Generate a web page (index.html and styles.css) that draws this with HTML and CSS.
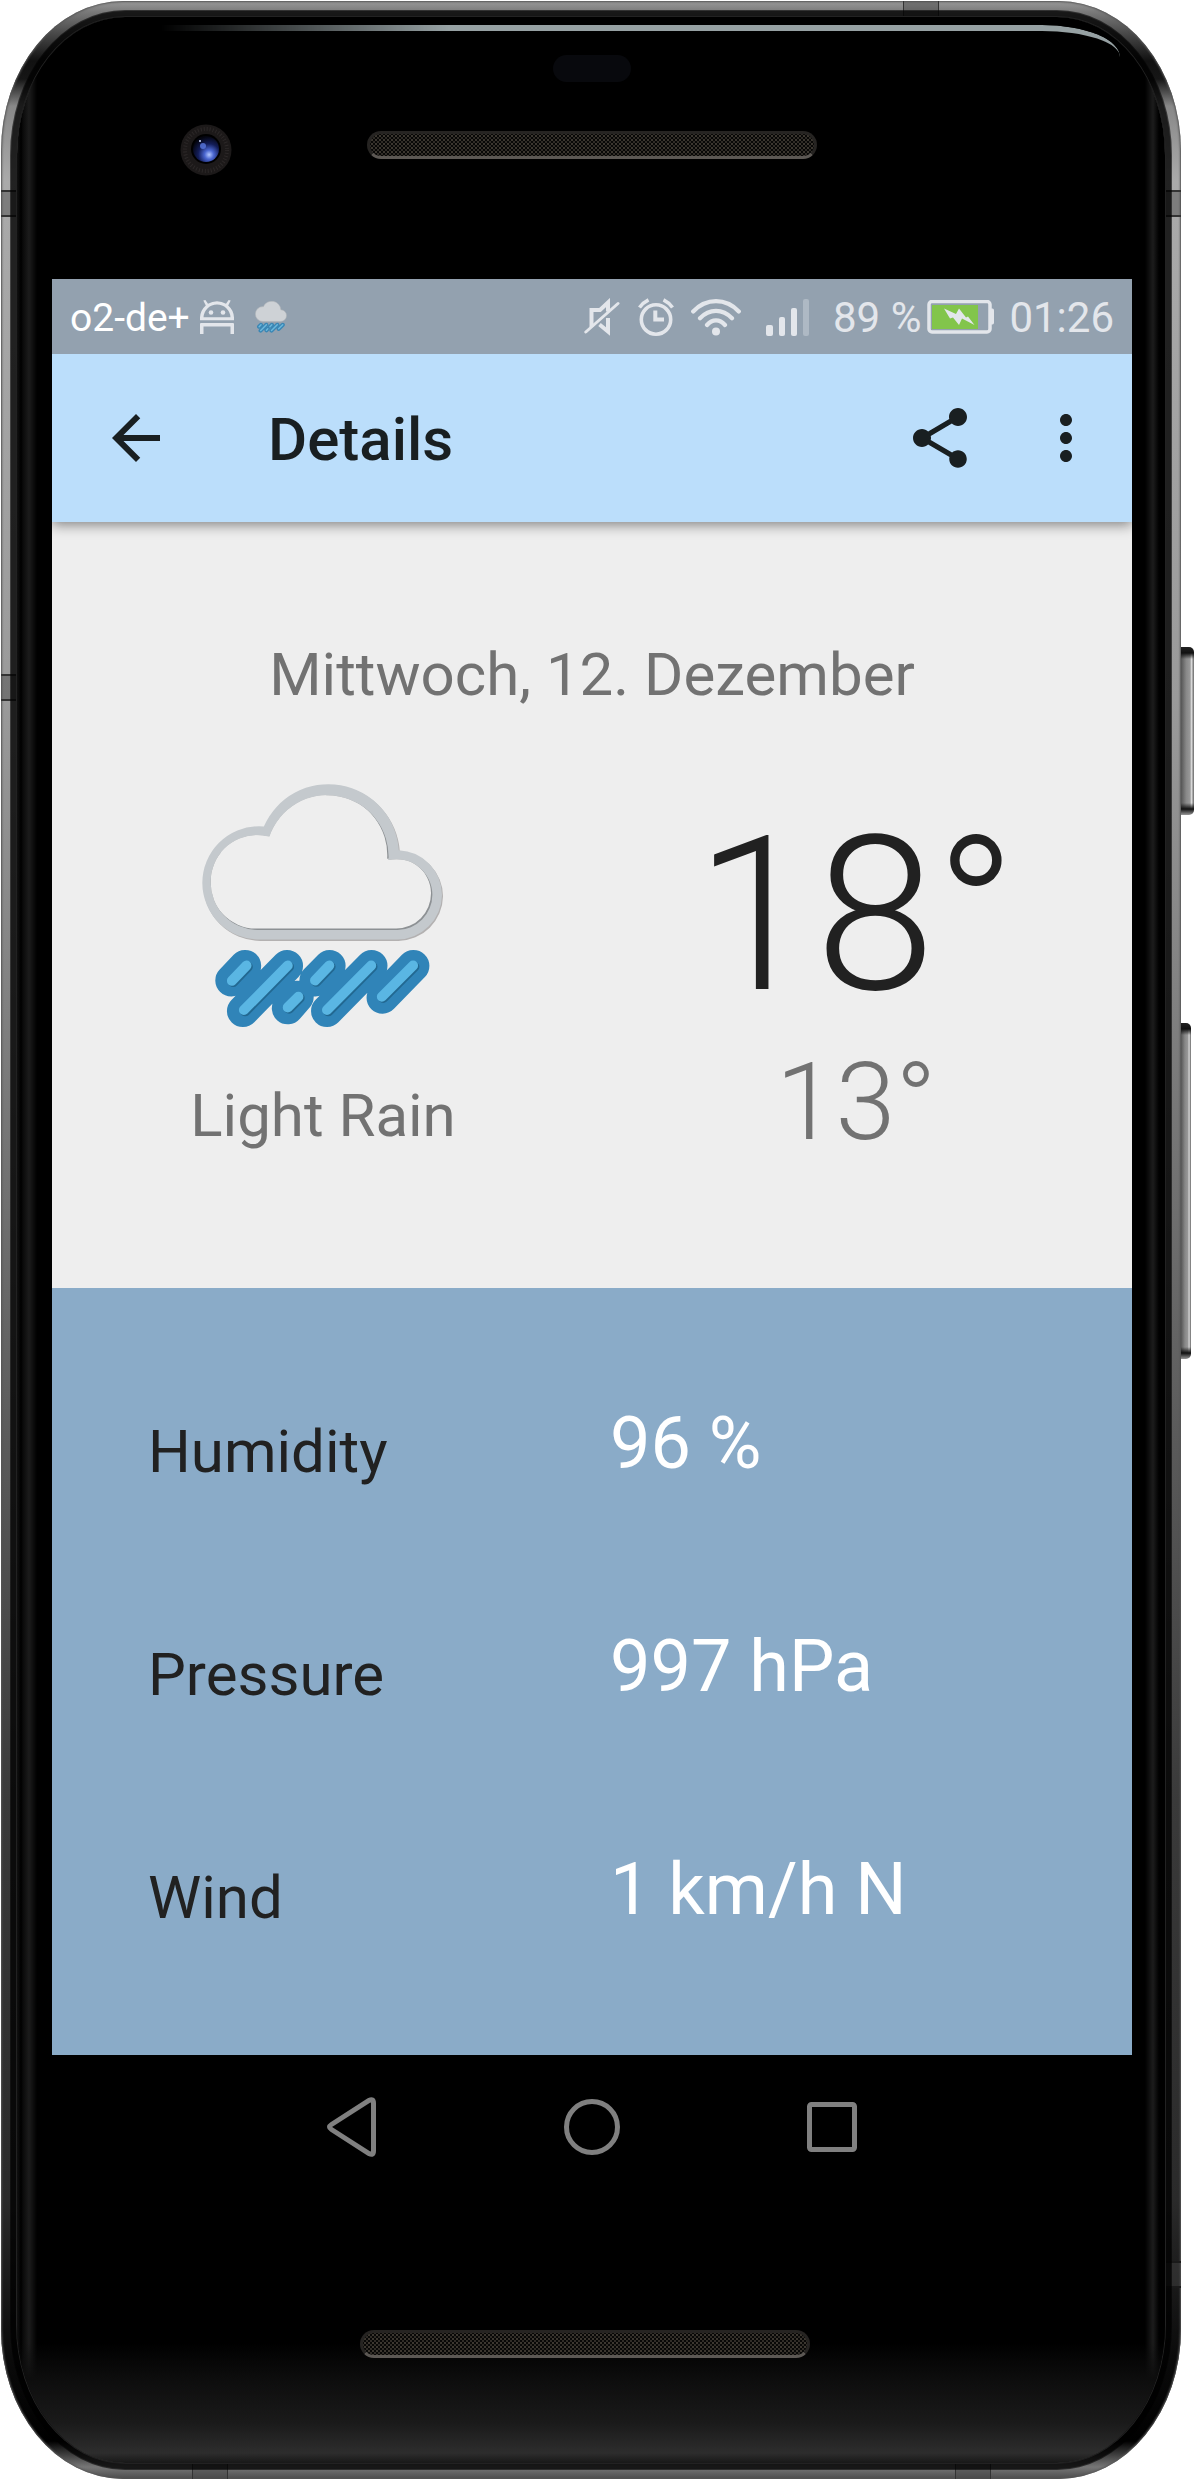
FILE: index.html
```html
<!DOCTYPE html>
<html lang="de">
<head>
<meta charset="utf-8">
<meta name="viewport" content="width=device-width, initial-scale=1">
<title>Details</title>
<link rel="stylesheet" href="styles.css">
</head>
<body>
<div class="phone">
  <span class="side-key power"></span>
  <span class="side-key volume"></span>
  <span class="seam seam-left-top"></span>
  <span class="seam seam-left-mid"></span>
  <span class="seam seam-right-top"></span>
  <span class="seam seam-right-low"></span>
  <span class="seam seam-top"></span>
  <span class="seam seam-foot-left"></span>
  <span class="seam seam-foot-right"></span>
  <div class="bezel">
    <div class="glare"></div>
    <header class="forehead">
      <div class="sensor"></div>
      <svg class="camera" viewBox="0 0 52 52" aria-hidden="true">
        <defs><radialGradient id="lens" cx=".62" cy=".72" r=".7"><stop offset="0" stop-color="#b4c8ff"/><stop offset=".25" stop-color="#4a66d0"/><stop offset=".6" stop-color="#131d58"/><stop offset="1" stop-color="#04050f"/></radialGradient></defs>
        <circle cx="26" cy="26" r="25.500" fill="#1c1919"/>
        <circle cx="26" cy="26" r="21" fill="none" stroke="#2c2828" stroke-width="4" stroke-dasharray="1 2"/>
        <circle cx="26" cy="25" r="15" fill="#000"/>
        <circle cx="26" cy="25" r="13" fill="url(#lens)"/>
        <circle cx="23" cy="22" r="3" fill="#5a78e0" opacity=".8"/>
        <circle cx="20" cy="17" r="1" fill="#cfdcff"/>
      </svg>
      <div class="speaker"></div>
    </header>

    <main class="screen">
      <div class="status">
        <div class="status-left">
          <span class="carrier">o2-de+</span>
          <svg class="i-android" viewBox="0 0 34 34" aria-hidden="true"><path fill="#e3e6eb" fill-rule="evenodd" d="M3.300.6 5.400 0l2.600 3.800A17 17 0 0 1 17 1.200 17 17 0 0 1 26 3.800L28.600 0l2.100.6-2.500 5A17 17 0 0 1 34 17.500V20.300H0V17.500A17 17 0 0 1 5.800 5.600ZM3.500 17.300h27A13.500 13.500 0 0 0 17 4.500 13.500 13.500 0 0 0 3.500 17.300ZM0 24q0-1 1-1h32q1 0 1 1v10h-3.500v-7.500H3.500V34H0Z"/><circle cx="11" cy="12.500" r="2.300" fill="#e3e6eb"/><circle cx="23" cy="12.500" r="2.300" fill="#e3e6eb"/></svg>
          <svg class="i-rain" viewBox="90 65 740 740" aria-hidden="true">
            <path fill="#ced2d6" stroke="#aeb2b6" stroke-width="12" d="M268 537A171 171 0 0 1 97 366 171 171 0 0 1 268 195L282 196A212 212 0 0 1 688 267 136 136 0 0 1 820 402 136 136 0 0 1 684 537Z"/>
            <g fill="none" stroke-linecap="round"><path stroke="#3a86b4" stroke-width="94" d="M226 615 184 659M352 615 219 751M480 615 437 659M606 615 472 751M732 615 639 711M384 708 354 743"/><path stroke="#6cb8dc" stroke-width="34" d="M230 614 186 660M354 614 222 748M479 614 436 659M605 614 472 748M731 614 637 708M386 708 354 740"/></g>
          </svg>
        </div>
        <div class="status-right">
          <svg class="i-mute" viewBox="0 0 36 38" aria-hidden="true"><g fill="none" stroke="#e3e6eb"><path stroke-width="4" d="M7.500 29V12h8.500l8-7.500v9M15.500 26.500 24 33.500V20"/><path stroke-width="3" stroke-linecap="round" d="M1.800 34 34 5.500"/></g></svg>
          <svg class="i-alarm" viewBox="0 0 36 38" aria-hidden="true"><g fill="none" stroke="#e3e6eb"><circle cx="18" cy="21.500" r="14.700" stroke-width="3.600"/><path stroke-width="4" d="M17.300 12.500V21.500H26"/><path stroke-width="3.600" d="M1.500 9.500Q5 4.500 10.500 1.800M34.500 9.500Q31 4.500 25.500 1.800"/></g></svg>
          <svg class="i-wifi" viewBox="0 0 50 38" aria-hidden="true"><g fill="none" stroke="#e3e6eb" stroke-width="4.200" stroke-linecap="round"><path d="M2.200 13.500Q12 3.200 25 3.200T47.800 13.500M9 20.200Q16 12.800 25 12.800T41 20.200M16 27Q20 22.400 25 22.400T34 27"/></g><circle cx="25" cy="33.500" r="4" fill="#e3e6eb"/></svg>
          <svg class="i-signal" viewBox="0 0 44 38" aria-hidden="true"><g fill="#e3e6eb"><rect y="27" width="7" height="11" rx="2"/><rect x="13" y="19" width="6" height="19" rx="2"/><rect x="25" y="10" width="6" height="28" rx="2"/><rect x="37" y="1" width="6" height="37" rx="2" opacity=".35"/></g></svg>
          <span class="charge">89 %</span>
          <svg class="i-battery" viewBox="0 0 68 34" aria-hidden="true"><rect x="2" y="1.500" width="61" height="30.500" rx="3" fill="none" stroke="#e3e6eb" stroke-width="3.500"/><rect x="5" y="5" width="46" height="24" fill="#82c54b"/><path fill="#e3e6eb" d="M17 8.500 29 14 32 8.500 39 17.500 41 16.500 47.500 25 35 18.500 32 25 26 17.500 23 18.500ZM64 8.500h1.500q1.500 0 1.500 2v12q0 2-1.500 2H64Z"/></svg>
          <span class="clock">01:26</span>
        </div>
      </div>

      <nav class="appbar">
        <button class="icon-btn" aria-label="Back"><svg viewBox="0 0 24 24"><path d="M20 11H7.830l5.590-5.590L12 4l-8 8 8 8 1.410-1.410L7.830 13H20v-2z"/></svg></button>
        <h1>Details</h1>
        <button class="icon-btn" aria-label="Share"><svg viewBox="0 0 24 24"><path d="M18 16.080c-.76 0-1.440.3-1.960.77L8.910 12.700c.05-.23.09-.46.09-.7s-.04-.47-.09-.7l7.050-4.110c.54.5 1.250.81 2.040.81 1.660 0 3-1.340 3-3s-1.340-3-3-3-3 1.340-3 3c0 .24.04.47.09.7L8.040 9.810C7.500 9.310 6.790 9 6 9c-1.660 0-3 1.340-3 3s1.340 3 3 3c.79 0 1.500-.31 2.040-.81l7.120 4.160c-.05.21-.08.43-.08.65 0 1.610 1.310 2.920 2.920 2.920s2.920-1.310 2.920-2.920-1.310-2.920-2.920-2.920z"/></svg></button>
        <button class="icon-btn" aria-label="More options"><svg viewBox="0 0 24 24"><path d="M12 8c1.100 0 2-.9 2-2s-.9-2-2-2-2 .9-2 2 .9 2 2 2zm0 2c-1.100 0-2 .9-2 2s.9 2 2 2 2-.9 2-2-.9-2-2-2zm0 6c-1.100 0-2 .9-2 2s.9 2 2 2 2-.9 2-2-.9-2-2-2z"/></svg></button>
      </nav>

      <section class="today">
        <p class="date">Mittwoch, 12. Dezember</p>
        <div class="summary">
          <div class="condition">
            <svg class="weather" viewBox="90 65 740 740" aria-hidden="true">
              <defs>
                <path id="cloud-outer" d="M268 536A171 171 0 0 1 97 366 171 171 0 0 1 268 195L282 196A212 212 0 0 1 688 267 136 136 0 0 1 818 402 136 136 0 0 1 684 536Z"/>
                <path id="cloud-inner" d="M262 507A143 143 0 0 1 122 362 140 140 0 0 1 262 222Q281 222 299 227A184 184 0 0 1 657 297 108 108 0 0 1 789 401 106 106 0 0 1 684 507Z"/>
                <clipPath id="cloud-hole"><use href="#cloud-inner"/></clipPath>
              </defs>
              <use href="#cloud-outer" x="3" y="4" fill="#b3b1b1"/>
              <use href="#cloud-outer" fill="#c4c9cd"/>
              <use href="#cloud-inner" fill="#8d9194"/>
              <g clip-path="url(#cloud-hole)"><use href="#cloud-inner" x="-4" y="-4" fill="#eee"/><path fill="#eee" d="M100 60H470V460H200Z"/></g>
              <g fill="none" stroke-linecap="round">
                <path stroke="#3084b8" stroke-width="96" d="M226 615 184 659M352 615 219 751M480 615 437 659M606 615 472 751M732 615 639 711M384 708 354 743"/>
                <path stroke="#226891" stroke-width="30" d="M234 618 190 664M358 618 226 752M483 618 440 663M609 618 476 752M735 618 641 712M390 712 358 744"/>
                <path stroke="#5ab6e3" stroke-width="30" d="M230 614 186 660M354 614 222 748M479 614 436 659M605 614 472 748M731 614 637 708M386 708 354 740"/>
              </g>
            </svg>
            <p class="label">Light Rain</p>
          </div>
          <div class="temps">
            <p class="high">18°</p>
            <p class="low">13°</p>
          </div>
        </div>
      </section>

      <dl class="facts">
        <div class="fact"><dt>Humidity</dt><dd>96 %</dd></div>
        <div class="fact"><dt>Pressure</dt><dd>997 hPa</dd></div>
        <div class="fact"><dt>Wind</dt><dd>1 km/h N</dd></div>
      </dl>
    </main>

    <nav class="navbar">
      <button aria-label="Back"><svg viewBox="0 0 60 60"><path d="M9.500 27.500 47 3.500Q51.500 1 51.500 6V54Q51.500 59 47 56.500L9.500 32.500Q5.500 30 9.500 27.500Z"/></svg></button>
      <button aria-label="Home"><svg viewBox="0 0 60 60"><circle cx="30" cy="30" r="25.500"/></svg></button>
      <button aria-label="Recent apps"><svg viewBox="0 0 60 60"><rect x="7.500" y="7.500" width="45" height="45" rx="2"/></svg></button>
    </nav>
    <footer class="chin"><div class="speaker"></div></footer>
  </div>
</div>
</body>
</html>
```
FILE: styles.css
```css
* { box-sizing: border-box; }
body { margin: 0; background: #fff; font-family: Roboto, "Liberation Sans", sans-serif; color: #212121; }
p, h1, dl, dd { margin: 0; }
button { border: 0; padding: 0; background: none; }
svg { display: block; }

/* device body */
.phone {
  position: relative;
  margin: 1px 13px 0 1px;
  padding: 16px;
  border-radius: 122px / 150px;
  background:
    linear-gradient(#999 0, #777 12px, #444 35px, #111 60px, #161616 78px, #888 105px, #aaa 180px, #9a9a9a 700px, #707070 1200px, #3a3a3a 1800px, #2a2a2a 2200px, #0a0a0a 2360px, #000 2440px, #777 2466px, #444 2480px);
  box-shadow: inset 0 0 2px 1px #555;
}
.bezel {
  position: relative;
  padding: 0 33px 0 35px;
  border-radius: 108px / 138px;
  background:
    linear-gradient(transparent calc(100% - 120px), #0d0d0d calc(100% - 84px), #1a1a1a calc(100% - 40px), #2d2d2d calc(100% - 10px), #181818),
    linear-gradient(90deg, #111 0, #000 4px, #0a0a0a 6px, #1c1c1c 12px, #000 20px, #000 calc(100% - 20px), #1c1c1c calc(100% - 12px), #000 calc(100% - 6px), #000 100%);
  box-shadow: 0 0 0 1px #222, 0 0 0 6px rgba(0, 0, 0, .5), 0 0 0 7px rgba(0, 0, 0, .6);
}
.glare {
  position: absolute;
  top: 8px;
  left: 144px;
  right: 45px;
  height: 34px;
  border-top: 6px solid #96a1a3;
  border-radius: 0 78px 0 0 / 0 32px 0 0;
  -webkit-mask-image: linear-gradient(90deg, transparent, #000 30%);
  mask-image: linear-gradient(90deg, transparent, #000 30%);
}
.seam { position: absolute; background: rgba(70, 70, 70, .45); border: 0 solid #333; }
.seam-left-top, .seam-left-mid { left: 0; width: 16px; height: 27px; border-width: 2px 0; }
.seam-right-top, .seam-right-low { right: 0; width: 16px; height: 27px; border-width: 2px 0; }
.seam-left-top, .seam-right-top { top: 189px; }
.seam-left-mid { top: 673px; }
.seam-right-low { bottom: 191px; border-color: #1a1a1a; }
.seam-top, .seam-foot-left, .seam-foot-right { width: 36px; height: 15px; border-width: 0 1px; }
.seam-top { top: 0; right: 242px; }
.seam-foot-left { bottom: 0; left: 191px; }
.seam-foot-right { bottom: 0; right: 190px; }
.side-key {
  position: absolute;
  left: 100%;
  border-radius: 0 5px 5px 0;
  background:
    linear-gradient(#222 0, #111 6px, transparent 12px, transparent calc(100% - 12px), #111 calc(100% - 6px), #999 100%),
    linear-gradient(90deg, #555, #888 40%, #999 70%, #ddd 80%, #666);
}
.power { top: 646px; width: 13px; height: 168px; }
.volume { top: 1022px; width: 10px; height: 336px; }

.forehead {
  display: grid;
  grid-template-columns: 180px 1fr 180px;
  grid-template-rows: 38px 27px 42px 50px;
  padding-bottom: 105px;
}
.sensor { grid-area: 2 / 2; justify-self: center; width: 78px; border-radius: 14px; background: #08090d; }
.camera { grid-area: 4 / 1; justify-self: end; width: 52px; height: 52px; }
.speaker {
  width: 450px;
  height: 28px;
  border: 3px solid #262422;
  border-bottom-color: #5c5854;
  border-radius: 14px;
  background:
    radial-gradient(circle, #3c3730 1px, transparent 1px) 0 0 / 4px 4px,
    radial-gradient(circle, #302c27 1px, transparent 1px) 2px 2px / 4px 4px,
    #080807;
}
.forehead .speaker { grid-area: 4 / 2; justify-self: center; margin-top: 7px; }

/* status bar */
.status { display: flex; justify-content: space-between; height: 75px; padding: 0 18px; background: #93a1af; font-size: 42px; line-height: 72px; }
.status-left, .status-right { display: flex; align-items: center; }
.status span { padding-top: 3px; }
.carrier { color: #fff; font-size: 39px; }
.charge, .clock { color: #e3e6eb; }
.i-android { width: 34px; height: 34px; margin-left: 10px; }
.i-rain { width: 32px; height: 32px; margin-left: 21px; }
.i-mute { width: 36px; height: 38px; }
.i-alarm { width: 36px; height: 38px; margin-left: 18px; }
.i-wifi { width: 50px; height: 38px; margin-left: 17px; }
.i-signal { width: 44px; height: 38px; margin-left: 25px; }
.charge { margin-left: 23px; }
.i-battery { width: 68px; height: 34px; margin-left: 6px; }
.clock { margin-left: 14px; }

/* toolbar */
.appbar { position: relative; display: flex; align-items: center; height: 168px; padding: 0 30px 0 48px; background: #bbdefb; box-shadow: 0 3px 12px rgba(0, 0, 0, .45); clip-path: inset(0 0 -20px 0); }
.appbar h1 { flex: 1; margin-left: 96px; padding-top: 4px; font-size: 60px; font-weight: 500; line-height: 72px; color: #191f21; }
.icon-btn { width: 72px; height: 72px; }
.icon-btn svg { width: 72px; height: 72px; fill: #191f21; }
.icon-btn + .icon-btn { margin-left: 54px; }

/* forecast */
.today { padding: 117px 96px 133px; background: #eee; color: #727272; font-size: 60px; line-height: 72px; }
.date { text-align: center; }
.summary { display: grid; grid-template-columns: 1fr 1fr; margin-top: 72px; }
.condition { display: flex; flex-direction: column; align-items: center; width: 350px; }
.weather { width: 246px; height: 246px; }
.label { margin-top: 51px; }
.temps { display: flex; flex-direction: column; align-items: center; padding-left: 84px; font-weight: 300; }
.high { color: #212121; font-size: 216px; line-height: 266px; }
.low { font-size: 108px; line-height: 106px; }

.facts { padding: 114px 96px 0; background: #8aabc8; }
.fact { display: grid; grid-template-columns: 1fr 1fr; align-items: start; padding-bottom: 131px; font-size: 60px; line-height: 84px; }
.fact:last-child { padding-bottom: 115px; }
.fact dt { padding-top: 8px; }
.fact dd { padding-left: 18px; color: #fff; font-size: 72px; }

.navbar { display: flex; justify-content: center; gap: 180px; padding-top: 42px; }
.navbar button, .navbar svg { width: 60px; height: 60px; }
.navbar svg { fill: none; stroke: #808080; stroke-width: 5px; }
.chin { padding: 173px 14px 105px 0; }
.chin .speaker { margin: 0 auto; }
```
